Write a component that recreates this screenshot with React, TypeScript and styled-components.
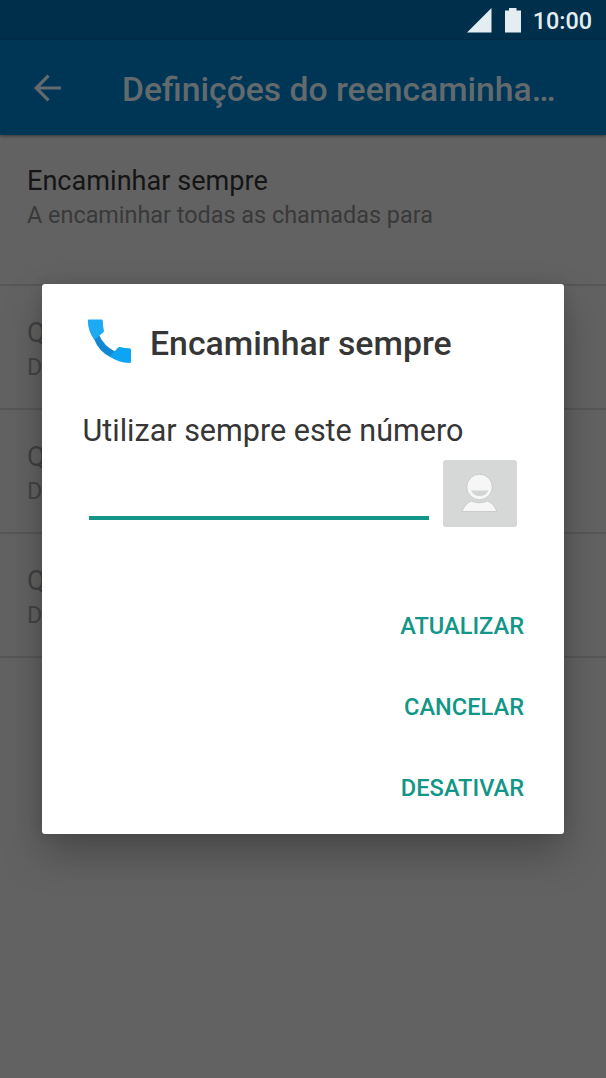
import React from 'react';
import styled, { createGlobalStyle } from 'styled-components';

const GlobalStyle = createGlobalStyle`
  * { box-sizing: border-box; }
  body { margin: 0; background: #626262; font-family: Roboto, sans-serif; }
`;

const Screen = styled.div`
  position: relative;
  width: 606px;
  height: 1078px;
  overflow: hidden;
  background: #626262;
`;

const StatusBar = styled.div`
  height: 40px;
  padding: 2px 14px 0 0;
  display: flex;
  align-items: center;
  justify-content: flex-end;
  background: #002f4b;
  color: #e4edf2;
`;

const SignalIcon = styled.svg`
  width: 25px;
  height: 25px;
  margin: -2px 12px 0 0;
`;

const BatteryIcon = styled.svg`
  width: 17px;
  height: 25px;
  margin: -2px 12px 0 0;
`;

const Clock = styled.span`
  font-size: 23.4px;
  font-weight: 500;
  line-height: 28px;
`;

const AppBar = styled.header`
  position: relative;
  height: 95px;
  display: flex;
  align-items: center;
  padding: 0 40px 0 33px;
  background: #003655;
  box-shadow: 0 1px 3px rgba(0, 0, 0, 0.45);
`;

const BackIcon = styled.svg`
  width: 28px;
  height: 28px;
  margin-right: 61px;
`;

const AppTitle = styled.h1`
  margin: 4px 0 0;
  font-size: 33.7px;
  font-weight: 500;
  line-height: 40px;
  color: #636a6e;
  white-space: nowrap;
`;

const SettingTitle = styled.div`
  font-size: 27.1px;
  line-height: 32px;
`;

const SettingSummary = styled.div`
  margin-top: 4px;
  font-size: 23.4px;
  line-height: 28px;
`;

const SettingRow = styled.div<{ $tall?: boolean; $disabled?: boolean }>`
  height: ${(p) => (p.$tall ? 151 : 124)}px;
  padding: ${(p) => (p.$tall ? 30 : 31)}px 27px 0;
  border-bottom: 2px solid #575757;
  color: ${(p) => (p.$disabled ? '#414141' : '#151515')};

  ${SettingSummary} {
    color: ${(p) => (p.$disabled ? '#444' : '#393939')};
  }
`;

const Dialog = styled.section`
  position: absolute;
  left: 42px;
  top: 284px;
  width: 522px;
  height: 550px;
  padding: 32px 40px 0 41px;
  display: flex;
  flex-direction: column;
  background: #fff;
  border-radius: 3px;
  color: #363636;
  box-shadow: 0 20px 40px rgba(0, 0, 0, 0.26), 0 0 14px rgba(0, 0, 0, 0.1);
`;

const DialogHeader = styled.div`
  height: 54px;
  display: flex;
  align-items: center;
`;

const PhoneIcon = styled.svg`
  width: 54px;
  height: 54px;
  margin-right: 13px;
`;

const DialogTitle = styled.h2`
  margin: 2px 0 0;
  font-size: 33.8px;
  font-weight: 500;
  line-height: 40px;
  white-space: nowrap;
`;

const Message = styled.label`
  margin: 43px 0 0 -0.5px;
  font-size: 30.5px;
  line-height: 36px;
  white-space: nowrap;
`;

const NumberRow = styled.div`
  display: flex;
  margin-top: 11px;
  padding-left: 6px;
`;

const NumberInput = styled.input`
  width: 340px;
  height: 60px;
  padding: 0;
  border: 0;
  border-bottom: 4px solid #119688;
  outline: 0;
  background: transparent;
  font: 30px Roboto, sans-serif;
`;

const ContactButton = styled.button`
  width: 74px;
  height: 67px;
  margin-left: 14px;
  padding: 0;
  border: 0;
  border-radius: 3px;
  background: #d6d7d7;
`;

const ContactIcon = styled.svg`
  display: block;
  width: 74px;
  height: 67px;
`;

const Actions = styled.div`
  margin-top: 58px;
  display: flex;
  flex-direction: column;
  align-items: flex-end;
`;

const Action = styled.button`
  height: 81px;
  padding: 0;
  border: 0;
  background: none;
  font: 500 23.6px/28px Roboto, sans-serif;
  color: #119688;
`;

const disabledRows = ['busy', 'unanswered', 'unreachable'];
const actions = ['ATUALIZAR', 'CANCELAR', 'DESATIVAR'];

export default function App() {
  return (
    <Screen>
      <GlobalStyle />
      <StatusBar>
        <SignalIcon viewBox="0 0 25 25">
          <path d="M0 24.5 24.5 0v24.5z" fill="currentColor" />
        </SignalIcon>
        <BatteryIcon viewBox="0 0 17 25">
          <path d="M5 0h7.500v2.500H17V24.500H1V2.500h4z" fill="currentColor" />
        </BatteryIcon>
        <Clock>10:00</Clock>
      </StatusBar>
      <AppBar>
        <BackIcon viewBox="0 0 28 28">
          <path d="M15.500 1.700 3.200 14 15.500 26.300M3.200 14H28" fill="none" stroke="#636a6e" strokeWidth="3.2" />
        </BackIcon>
        <AppTitle>Definições do reencaminha…</AppTitle>
      </AppBar>
      <SettingRow $tall>
        <SettingTitle>Encaminhar sempre</SettingTitle>
        <SettingSummary>A encaminhar todas as chamadas para</SettingSummary>
      </SettingRow>
      {disabledRows.map((row) => (
        <SettingRow key={row} $disabled>
          <SettingTitle>Q</SettingTitle>
          <SettingSummary>D</SettingSummary>
        </SettingRow>
      ))}
      <Dialog>
        <DialogHeader>
          <PhoneIcon viewBox="0 0 54 54">
            <path d="M10.800 22.500Q16 36 28 41.500L32 35.500Q21 30 16 19z" fill="#1388d2" />
            <path d="M6 3.500h12.500q1.200 0 1.300 1.200 0 5 1.100 9.700.3 1-.5 1.800L11.300 24Q5 15 4.800 4.700 4.800 3.500 6 3.500z" fill="#1cabf3" />
            <path d="M26.500 40.500l8.700-9q.8-.8 1.800-.5 4.500 1.200 9.300 1.200 1.700 0 1.700 1.500V45.500q0 1.500-1.700 1.500Q35.500 46.500 26.500 40.500z" fill="#0da5f3" />
          </PhoneIcon>
          <DialogTitle>Encaminhar sempre</DialogTitle>
        </DialogHeader>
        <Message htmlFor="number">Utilizar sempre este número</Message>
        <NumberRow>
          <NumberInput id="number" type="tel" />
          <ContactButton aria-label="Contactos">
            <ContactIcon viewBox="0 0 74 67">
              <g fill="#f6f6f6" stroke="#cbcccc" strokeWidth="1">
                <path d="M19 51.500Q22 43.500 28.500 41q8 3.500 16 0 6.500 2.500 9.500 10.500z" />
                <circle cx="36.500" cy="27" r="12.800" />
              </g>
              <path d="M28 30.500h17.500q-2.500 5.500-8.750 5.500T28 30.500z" fill="#d3d4d4" />
            </ContactIcon>
          </ContactButton>
        </NumberRow>
        <Actions>
          {actions.map((label) => (
            <Action key={label}>{label}</Action>
          ))}
        </Actions>
      </Dialog>
    </Screen>
  );
}
